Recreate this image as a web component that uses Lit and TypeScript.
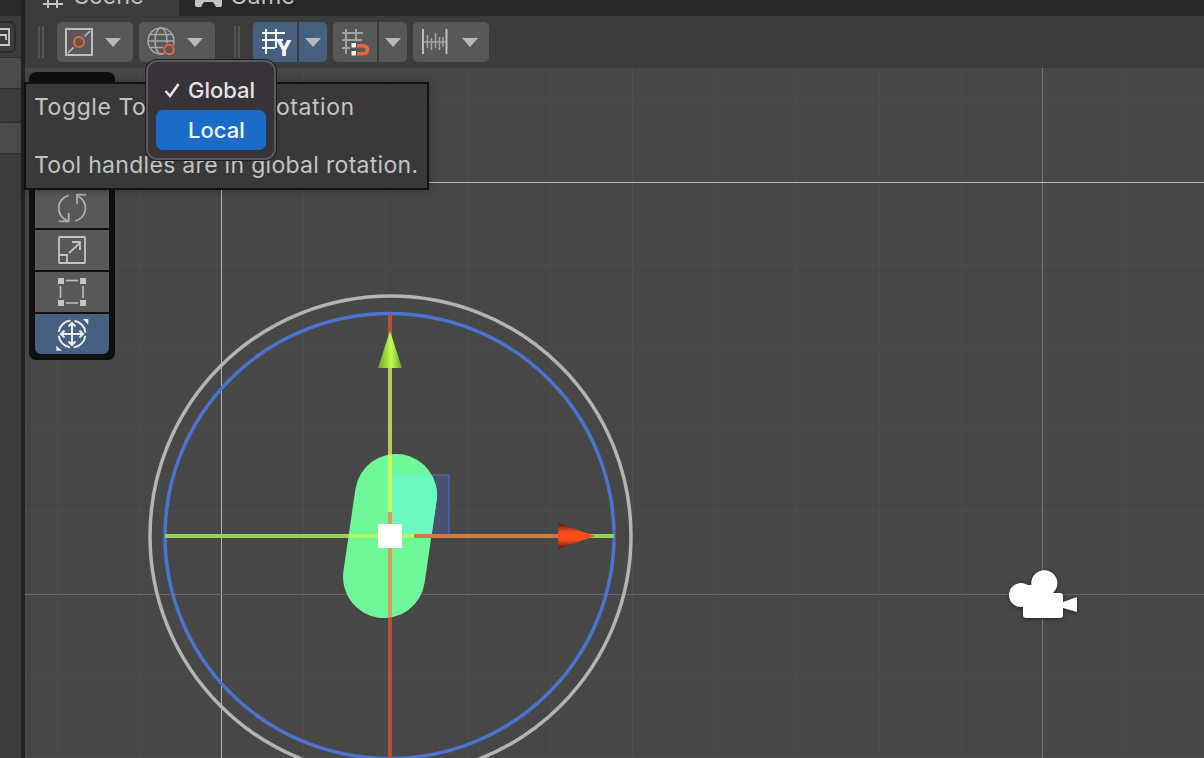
import { LitElement, css, html, svg } from "lit";
import { customElement } from "lit/decorators.js";

const GRID_STEP = 82.2;
const caret = html`<svg class="caret" width="16" height="9" viewBox="0 0 16 9"><path d="M0 0H16L8 9Z" fill="#b9b9b9" /></svg>`;

const pivotIcon = html`<svg width="28" height="28" viewBox="0 0 28 28" fill="none">
  <rect x="1" y="1" width="26" height="26" stroke="#bdbdbd" stroke-width="2" />
  <path d="M3 25L8.5 19.5M19.5 8.5L25 3" stroke="#bdbdbd" stroke-width="1.6" />
  <circle cx="14" cy="14" r="5" stroke="#f0623a" stroke-width="2" />
</svg>`;

const globeIcon = html`<svg width="30" height="30" viewBox="0 0 30 30" fill="none">
  <g stroke="#a8a8a8" stroke-width="1.5">
    <circle cx="14" cy="14" r="13" />
    <ellipse cx="14" cy="14" rx="6" ry="13" />
    <path d="M1 14H27M3 7.5H25M3 20.5H25" />
  </g>
  <circle cx="22" cy="22.5" r="6.5" fill="#585858" />
  <circle cx="22" cy="22.5" r="4.8" stroke="#f0623a" stroke-width="2" />
</svg>`;

const gridYIcon = html`<svg class="grid-y" width="30" height="30" viewBox="0 0 30 30" fill="none">
  <path d="M2 6H25M2 13H23M2 21H15M6 2V27M16 2V21" stroke="#f4f4f4" stroke-width="2" />
  <text x="16" y="28.500" class="letter">Y</text>
</svg>`;

const snapIcon = html`<svg width="30" height="30" viewBox="0 0 30 30" fill="none">
  <path d="M2 6H23M2 13H22M2 21H10M6 2V27M16 2V13" stroke="#a2a2a2" stroke-width="2" />
  <rect x="11.5" y="16" width="4.5" height="4.5" fill="#f2f2f2" />
  <rect x="11.5" y="24" width="4.5" height="4.5" fill="#f2f2f2" />
  <path d="M17 18.7H23.5A4 4 0 0 1 23.5 26.7H17" stroke="#f0623a" stroke-width="3.6" />
</svg>`;

const rulerIcon = html`<svg width="28" height="28" viewBox="0 0 28 28" fill="none">
  <path d="M2 1V26M25.5 1V26" stroke="#bcbcbc" stroke-width="2" />
  <path d="M2 14H25M6.5 7V20M10.5 10V22M14.5 5V20M18.5 9V22M22 9V19" stroke="#a5a5a5" stroke-width="1.5" />
</svg>`;

const rotateIcon = html`<svg width="30" height="30" viewBox="0 0 30 30" fill="none" stroke="#b0b0b0" stroke-width="1.8">
  <path d="M11.7 2.3A13.3 13.3 0 0 0 10 27.5M1.7 28.3H11.7V20" />
  <path d="M18.3 28A13.3 13.3 0 0 0 20.7 3M29.3 1.7H20V10.7" />
</svg>`;

const scaleIcon = html`<svg width="30" height="30" viewBox="0 0 30 30" fill="none" stroke="#c4c4c4" stroke-width="1.8">
  <rect x="2" y="2" width="26" height="26" rx="1" />
  <path d="M2 20H10V28M12 18L23 8M15 7H23V15" />
</svg>`;

const rectIcon = html`<svg width="30" height="30" viewBox="0 0 30 30" fill="none">
  <g fill="#c4c4c4">
    <rect x="1" y="1" width="6" height="6" /><rect x="23" y="1" width="6" height="6" />
    <rect x="1" y="23" width="6" height="6" /><rect x="23" y="23" width="6" height="6" />
  </g>
  <path d="M9 3.5H21M9 26H21M3.5 9V21M26 9V21" stroke="#c4c4c4" stroke-width="1.5" />
</svg>`;

const transformIcon = html`<svg width="38" height="38" viewBox="0 0 38 38" fill="none" stroke="#ececec">
  <circle cx="19" cy="19" r="13.5" stroke-width="2" stroke-dasharray="17.2 4" stroke-dashoffset="-2" />
  <path d="M19 8V30M8 19H30" stroke-width="2" />
  <path d="M15.5 11.5L19 8L22.5 11.5M15.5 26.5L19 30L22.5 26.5M11.5 15.5L8 19L11.5 22.5M26.5 15.5L30 19L26.5 22.5" stroke-width="2" />
  <path d="M30 4H35.3V9.7Z M3.3 30.7V35.7H9Z" fill="#ececec" stroke="none" />
</svg>`;

@customElement("app-root")
export class AppRoot extends LitElement {
  static styles = css`
    :host {
      display: flex;
      position: relative;
      width: 1204px;
      height: 758px;
      overflow: hidden;
      background: #3c3c3c;
      font-family: Inter, "Liberation Sans", sans-serif;
    }
    .sidebar {
      width: 21px;
      flex: none;
      display: flex;
      flex-direction: column;
      background: #3c3c3c;
    }
    .side-top {
      height: 16px;
      background: #2a2a2a;
    }
    .side-head {
      height: 41px;
      display: flex;
      align-items: center;
    }
    .side-btn {
      width: 16px;
      height: 32px;
      box-sizing: border-box;
      border: 2px solid #2c2c2c;
      border-left: none;
      border-radius: 0 6px 6px 0;
      display: flex;
      align-items: center;
    }
    .side-row {
      height: 34px;
      border-top: 1px solid #2f2f2f;
      box-sizing: border-box;
    }
    .side-row.on {
      height: 31px;
      background: #4b4b4b;
    }
    .side-row.rest {
      flex: 1;
    }
    .divider {
      width: 4px;
      flex: none;
      background: #222;
    }
    .main {
      flex: 1;
      display: flex;
      flex-direction: column;
      min-width: 0;
    }
    .tabs {
      height: 16px;
      flex: none;
      display: flex;
      background: #282828;
      overflow: hidden;
      color: #bfbfbf;
      font-size: 23.5px;
      line-height: 26px;
    }
    .tab {
      display: flex;
      height: 16px;
    }
    .tab.active {
      width: 154px;
      box-sizing: border-box;
      padding-left: 18px;
      background: #3c3c3c;
      gap: 11px;
    }
    .tab.game {
      padding-left: 16px;
      gap: 8px;
    }
    .tab span {
      flex: none;
      margin-top: -17px;
    }
    .tab svg {
      flex: none;
    }
    .toolbar {
      height: 52px;
      flex: none;
      display: flex;
      align-items: center;
      padding-left: 13px;
      background: #3c3c3c;
      box-sizing: border-box;
    }
    .grip {
      width: 6px;
      height: 32px;
      flex: none;
      box-sizing: border-box;
      border-left: 2px solid #555;
      border-right: 2px solid #555;
      margin-right: 13px;
    }
    .grip.second {
      margin-left: 13px;
    }
    .btn {
      height: 40px;
      display: flex;
      align-items: center;
      flex: none;
      background: #585858;
      border-radius: 5px;
      margin-right: 6px;
      box-sizing: border-box;
    }
    .btn.wide {
      width: 76px;
      padding-left: 8px;
      gap: 12px;
    }
    .btn.wide.globe {
      gap: 10px;
    }
    .btn.wide.ruler {
      gap: 13px;
    }
    .split {
      display: flex;
      flex: none;
      gap: 2px;
      margin-right: 6px;
    }
    .split .btn {
      margin-right: 0;
      justify-content: center;
    }
    .split .left {
      width: 44px;
      border-radius: 5px 0 0 5px;
    }
    .split .right {
      width: 28px;
      border-radius: 0 5px 5px 0;
    }
    .split.blue .btn {
      background: #46607f;
    }
    .grid-y {
      overflow: visible;
    }
    .letter {
      font-family: Inter, "Liberation Sans", sans-serif;
      font-size: 21px;
      font-weight: 800;
      fill: #f4f4f4;
      stroke: none;
    }
    .canvas {
      flex: 1;
      position: relative;
      background: #474747;
      overflow: hidden;
    }
    .scene {
      display: block;
      width: 1179px;
      height: 690px;
    }
    .tools {
      position: absolute;
      left: 4px;
      top: 4px;
      width: 86px;
      height: 288px;
      box-sizing: border-box;
      padding: 0 6px 6px;
      display: flex;
      flex-direction: column;
      justify-content: flex-end;
      gap: 2px;
      background: #0f0f0f;
      border-radius: 7px;
    }
    .tool {
      height: 40px;
      flex: none;
      display: flex;
      align-items: center;
      justify-content: center;
      background: #585858;
    }
    .tool.active {
      background: #46607f;
      border-radius: 0 0 6px 6px;
    }
    .tooltip {
      position: absolute;
      left: 24px;
      top: 82px;
      width: 405px;
      height: 108px;
      box-sizing: border-box;
      padding: 9px 8px;
      background: #393939;
      border: 2px solid #111;
      color: #c4c4c4;
      font-size: 23px;
      letter-spacing: 0.3px;
      line-height: 29px;
      white-space: pre;
      box-shadow: 0 0 8px rgba(0, 0, 0, 0.35);
    }
    .tooltip .title {
      letter-spacing: 0.56px;
    }
    .menu {
      position: absolute;
      left: 146px;
      top: 60px;
      width: 130px;
      height: 100px;
      box-sizing: border-box;
      padding: 8px;
      display: flex;
      flex-direction: column;
      background: #383338;
      border: 2px solid #5a585a;
      border-radius: 11px;
      box-shadow: 0 0 0 1px #1d1d1d;
      color: #e4e4e4;
      font-size: 22px;
      font-weight: 500;
    }
    .item {
      height: 40px;
      flex: none;
      display: flex;
      align-items: center;
      padding-left: 32px;
      border-radius: 7px;
      position: relative;
    }
    .item.selected {
      background: #1a6cc8;
      color: #f2f6fc;
    }
    .check {
      position: absolute;
      left: 8px;
      top: 12px;
    }
    .camera {
      filter: drop-shadow(0 1px 2px rgba(0, 0, 0, 0.45));
    }
  `;

  renderGrid() {
    const lines = [];
    for (let i = -2; i < 13; i++) {
      const x = 221.5 + i * GRID_STEP;
      if (i !== 0 && i !== 10) {
        lines.push(svg`<line x1=${x} x2=${x} y1="68" y2="758" stroke="#4e4e4e" />`);
      }
    }
    for (let i = 0; i < 9; i++) {
      const y = 100.3 + i * GRID_STEP;
      if (i !== 1 && i !== 6) {
        lines.push(svg`<line x1="25" x2="1204" y1=${y} y2=${y} stroke="#4e4e4e" />`);
      }
    }
    return lines;
  }

  renderScene() {
    return html`<svg class="scene" viewBox="25 68 1179 690">
      <defs>
        <clipPath id="capsule-clip">
          <rect x="349" y="453.5" width="82" height="165" rx="41" transform="rotate(8.3 390 536)" />
        </clipPath>
        <linearGradient id="cone-x" x1="0" y1="0" x2="0" y2="1">
          <stop offset="0" stop-color="#401c10" />
          <stop offset="0.35" stop-color="#ff4a20" />
          <stop offset="0.65" stop-color="#ff4a20" />
          <stop offset="1" stop-color="#401c10" />
        </linearGradient>
        <linearGradient id="cone-y" x1="0" y1="0" x2="1" y2="0">
          <stop offset="0" stop-color="#6aa028" />
          <stop offset="0.55" stop-color="#c0ff50" />
          <stop offset="1" stop-color="#6aa028" />
        </linearGradient>
      </defs>
      ${this.renderGrid()}
      <line x1="221.5" x2="221.5" y1="68" y2="758" stroke="#b4b4b4" />
      <line x1="1042.5" x2="1042.5" y1="68" y2="758" stroke="#777" />
      <line x1="25" x2="1204" y1="182.5" y2="182.5" stroke="#b8b8b8" />
      <line x1="25" x2="1204" y1="594.5" y2="594.5" stroke="#666" />

      <ellipse cx="390.5" cy="536" rx="240.5" ry="240" fill="none" stroke="#b4b4b4" stroke-width="3.5" />
      <ellipse cx="389.5" cy="536" rx="224.5" ry="222.5" fill="none" stroke="#4a74d0" stroke-width="3.5" />

      <rect x="392" y="475" width="57" height="60" fill="#4a5070" stroke="#4a74c8" />
      <rect x="349" y="453.5" width="82" height="165" rx="41" fill="#6ff799" transform="rotate(8.3 390 536)" />
      <rect x="392" y="475" width="57" height="60" fill="#6cf9c0" clip-path="url(#capsule-clip)" />

      <rect x="388" y="314" width="4" height="444" fill="#b8503a" />
      <rect x="388" y="368" width="4" height="144" fill="#b5cf55" />
      <rect x="388" y="512" width="4" height="12" fill="#b8a090" />
      <rect x="388" y="368" width="4" height="144" fill="#c8fa5c" clip-path="url(#capsule-clip)" />
      <rect x="388" y="512" width="4" height="106" fill="#e09a60" clip-path="url(#capsule-clip)" />

      <rect x="165" y="534" width="449" height="4" fill="#98d058" />
      <rect x="165" y="534" width="449" height="4" fill="#aef868" clip-path="url(#capsule-clip)" />
      <rect x="414" y="534" width="146" height="4" fill="#d07a40" />
      <polygon points="390,331 378,368 402,368" fill="url(#cone-y)" />
      <polygon points="558,523 595,536 558,549" fill="url(#cone-x)" />
      <rect x="378" y="524" width="24" height="24" fill="#fff" />

      <g class="camera" fill="#fff">
        <circle cx="1044.3" cy="583.3" r="13" />
        <circle cx="1021" cy="595" r="12" />
        <rect x="1028" y="585" width="20" height="12" />
        <rect x="1023" y="593" width="40" height="25" rx="3" />
        <polygon points="1063,602 1077,597 1077,612 1063,608" />
      </g>
    </svg>`;
  }

  render() {
    return html`
      <div class="sidebar">
        <div class="side-top"></div>
        <div class="side-head">
          <div class="side-btn">
            <svg width="10" height="20" viewBox="0 0 10 20" fill="none">
              <path d="M0 2H9V18H0" stroke="#c9c9c9" stroke-width="1.8" />
              <path d="M0 8H6V13" stroke="#c9c9c9" stroke-width="1.8" />
            </svg>
          </div>
        </div>
        <div class="side-row on"></div>
        <div class="side-row"></div>
        <div class="side-row on"></div>
        <div class="side-row rest"></div>
      </div>
      <div class="divider"></div>
      <div class="main">
        <div class="tabs">
          <div class="tab active">
            <svg width="20" height="8" viewBox="0 0 20 8" fill="none" stroke="#c4c4c4" stroke-width="2">
              <path d="M5 0V8M14 0V8M0 4H20" />
            </svg>
            <span>Scene</span>
          </div>
          <div class="tab game">
            <svg width="27" height="7" viewBox="0 0 27 7">
              <path d="M0 0H27V3A3.5 3.5 0 0 1 20 5L18 2H9L7 5A3.5 3.5 0 0 1 0 3Z" fill="#c4c4c4" />
            </svg>
            <span>Game</span>
          </div>
        </div>
        <div class="toolbar">
          <div class="grip"></div>
          <div class="btn wide">${pivotIcon}${caret}</div>
          <div class="btn wide globe">${globeIcon}${caret}</div>
          <div class="grip second"></div>
          <div class="split blue">
            <div class="btn left">${gridYIcon}</div>
            <div class="btn right">${caret}</div>
          </div>
          <div class="split">
            <div class="btn left">${snapIcon}</div>
            <div class="btn right">${caret}</div>
          </div>
          <div class="btn wide ruler">${rulerIcon}${caret}</div>
        </div>
        <div class="canvas">
          ${this.renderScene()}
          <div class="tools">
            <div class="tool">${rotateIcon}</div>
            <div class="tool">${scaleIcon}</div>
            <div class="tool">${rectIcon}</div>
            <div class="tool active">${transformIcon}</div>
          </div>
        </div>
      </div>
      <div class="tooltip"><span class="title">Toggle Tool Handle Rotation</span>

Tool handles are in global rotation.</div>
      <div class="menu">
        <div class="item">
          <svg class="check" width="16" height="16" viewBox="0 0 16 16" fill="none">
            <path d="M1.5 9L6 14L14.5 2" stroke="#e8e8e8" stroke-width="2.5" />
          </svg>
          Global
        </div>
        <div class="item selected">Local</div>
      </div>
    `;
  }
}
